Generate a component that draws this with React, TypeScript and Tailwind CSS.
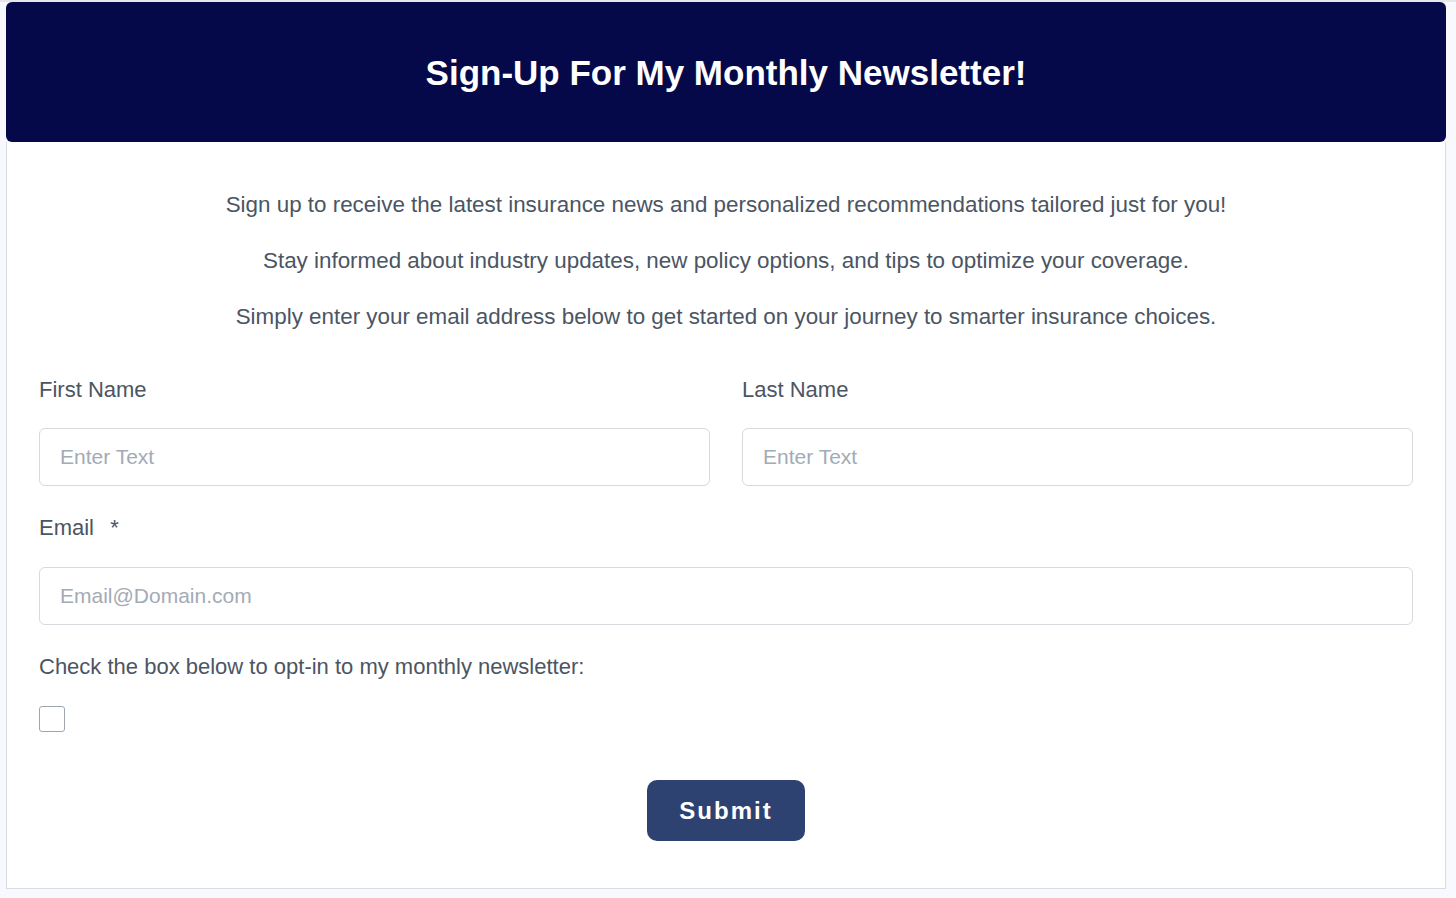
import React from "react";

export default function App() {
  const font = { fontFamily: '"Liberation Sans", Arial, sans-serif' };
  const inputCls =
    "h-[58px] w-full rounded-[6px] border border-[#d6d9de] px-[20px] text-[21px] text-[#4b5563] outline-none placeholder:text-[#a3abb6]";
  return (
    <div className="min-h-[898px] w-full bg-[#f8f9fe]" style={font}>
      <div className="h-[2px] bg-[#e6e7ea]" />
      <div className="ml-[6px] mr-[10px]">
        <div className="flex h-[140px] items-center justify-center rounded-[6px] bg-[#05094a]">
          <h1 className="text-[35px] font-bold leading-none text-white">Sign-Up For My Monthly Newsletter!</h1>
        </div>
        <div className="border-x border-b border-[#d9dce2] bg-white px-[32px] pb-[47px] pt-[50px]">
          <div className="flex flex-col items-center gap-[31px] text-[22.4px] leading-[25px] text-[#4b5563]">
            <p>Sign up to receive the latest insurance news and personalized recommendations tailored just for you!</p>
            <p>Stay informed about industry updates, new policy options, and tips to optimize your coverage.</p>
            <p>Simply enter your email address below to get started on your journey to smarter insurance choices.</p>
          </div>
          <div className="mt-[48px] grid grid-cols-2 gap-x-[32px]">
            <div>
              <label className="block text-[22px] leading-[25px] text-[#4b5563]">First Name</label>
              <div className="mt-[26px]">
                <input placeholder="Enter Text" className={inputCls} />
              </div>
            </div>
            <div>
              <label className="block text-[22px] leading-[25px] text-[#4b5563]">Last Name</label>
              <div className="mt-[26px]">
                <input placeholder="Enter Text" className={inputCls} />
              </div>
            </div>
          </div>
          <label className="mt-[29px] block text-[22px] leading-[25px] text-[#4b5563]">
            Email <span className="ml-[10px]">*</span>
          </label>
          <div className="mt-[27px]">
            <input placeholder="Email@Domain.com" className={inputCls} />
          </div>
          <p className="mt-[29px] text-[22px] leading-[25px] text-[#4b5563]">
            Check the box below to opt-in to my monthly newsletter:
          </p>
          <div className="mt-[27px] h-[26px] w-[26px] rounded-[3px] border border-[#9ea6b0] bg-white" />
          <div className="mt-[48px] flex justify-center">
            <button className="h-[61px] w-[158px] rounded-[10px] bg-[#2e4272] text-[24px] font-bold tracking-[2px] text-white">
              Submit
            </button>
          </div>
        </div>
      </div>
    </div>
  );
}
